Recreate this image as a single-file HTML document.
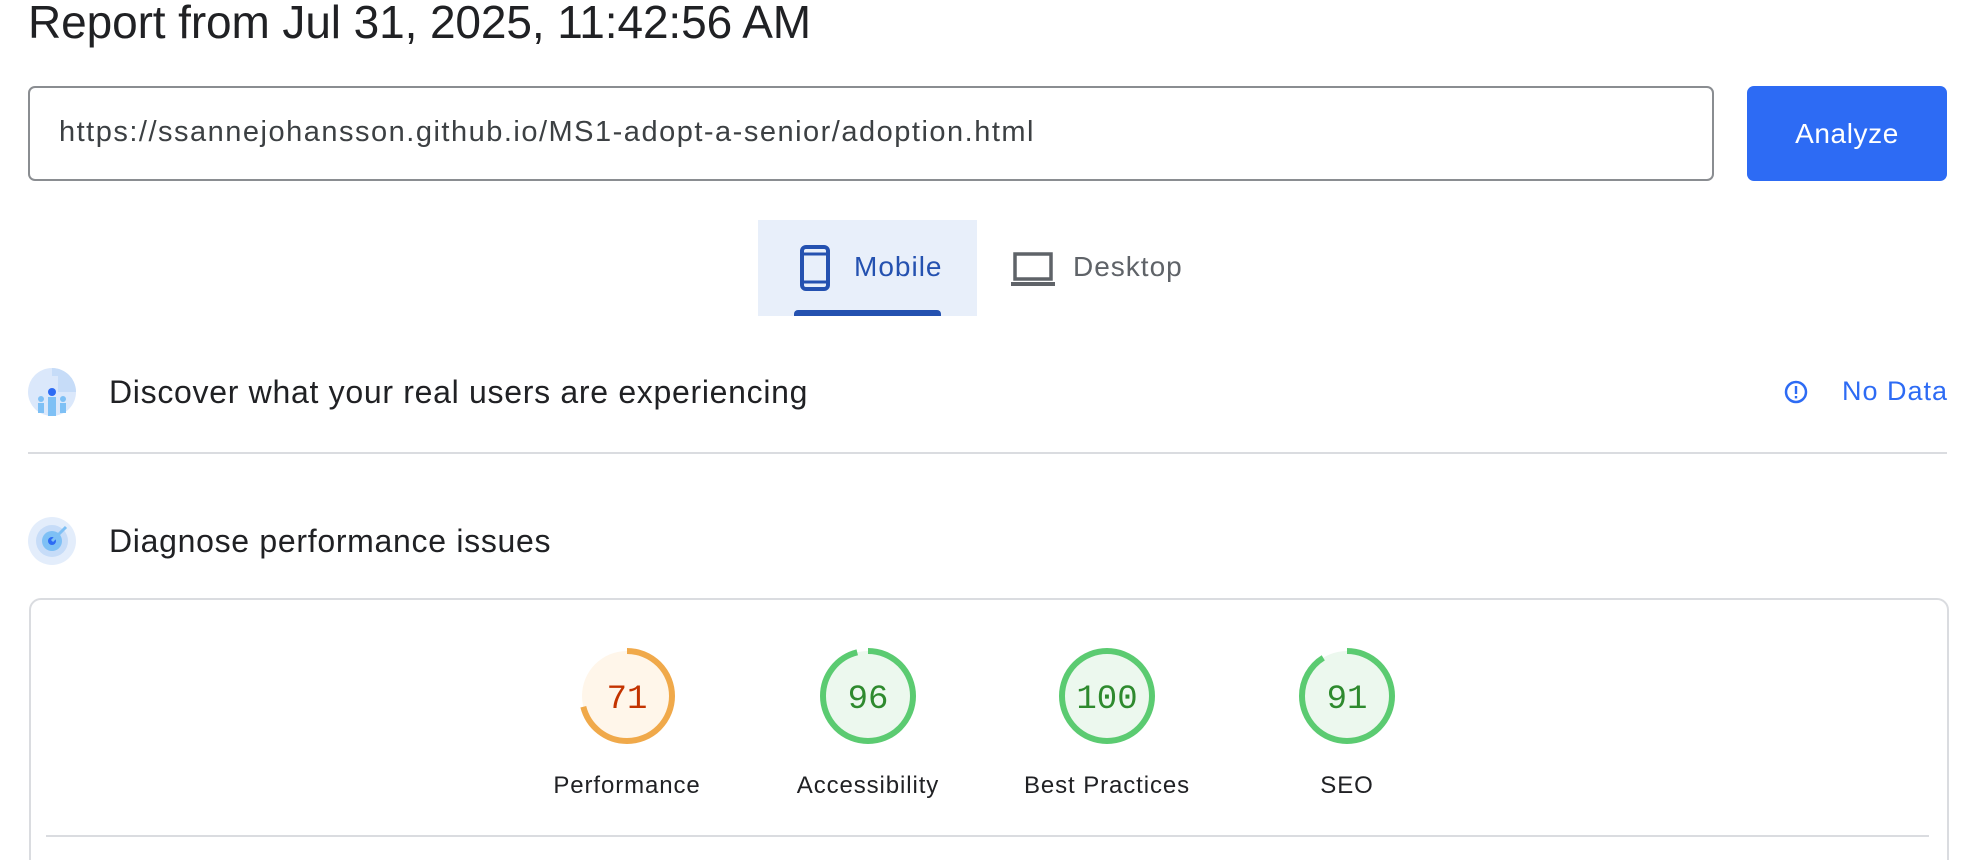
<!DOCTYPE html>
<html style="height:860px;overflow:hidden"><head><meta charset="utf-8"><style>
html,body{height:860px;overflow:hidden}
body{margin:0;width:1984px;background:#fff;font-family:"Liberation Sans",sans-serif;position:relative;color:#202124}
.a{position:absolute}
</style></head><body>
<div class="a" style="left:28px;top:-5px;font-size:46px;color:#202124;letter-spacing:-0.1px">Report from Jul 31, 2025, 11:42:56 AM</div>
<div class="a" style="left:28px;top:86px;width:1682px;height:91px;border:2px solid #8a8d91;border-radius:7px"></div>
<div class="a" style="left:59px;top:116px;font-size:29px;letter-spacing:1.5px;color:#3c4043">https://ssannejohansson.github.io/MS1-adopt-a-senior/adoption.html</div>
<div class="a" style="left:1747px;top:86px;width:200px;height:95px;background:#2d6bf4;border-radius:7px;color:#fff;font-size:28px;letter-spacing:0.6px;line-height:95px;text-align:center">Analyze</div>

<div class="a" style="left:758px;top:220px;width:219px;height:96px;background:#e8effa"></div>
<div class="a" style="left:794px;top:310px;width:147px;height:6px;background:#2451b0;border-radius:4px 4px 0 0"></div>
<svg class="a" style="left:798px;top:245px" width="34" height="46" viewBox="0 0 34 46"><rect x="4" y="2" width="26" height="42" rx="4" fill="none" stroke="#2451b0" stroke-width="4"/><line x1="4" y1="9" x2="30" y2="9" stroke="#2451b0" stroke-width="3"/><line x1="4" y1="37" x2="30" y2="37" stroke="#2451b0" stroke-width="3"/></svg>
<div class="a" style="left:854px;top:251px;font-size:28px;letter-spacing:1px;color:#2451b0">Mobile</div>
<svg class="a" style="left:1010px;top:252px" width="46" height="36" viewBox="0 0 46 36"><rect x="5" y="2" width="36" height="25" fill="none" stroke="#5f6368" stroke-width="3.5"/><rect x="1" y="30" width="44" height="4" fill="#5f6368"/></svg>
<div class="a" style="left:1073px;top:251px;font-size:28px;letter-spacing:1px;color:#5f6368">Desktop</div>

<svg class="a" style="left:28px;top:368px" width="48" height="48" viewBox="0 0 48 48"><circle cx="24" cy="24" r="24" fill="#dbe8fb"/><path d="M24 0A24 24 0 0 1 48 24H30V8H24Z" fill="#c6dcf8"/><circle cx="24" cy="24" r="4" fill="#2d6bf4"/><rect x="20" y="29" width="8" height="19" fill="#7ec0f5"/><circle cx="13" cy="31" r="3" fill="#7ec0f5"/><rect x="10" y="35" width="6" height="10" fill="#7ec0f5"/><circle cx="35" cy="31" r="3" fill="#7ec0f5"/><rect x="32" y="35" width="6" height="10" fill="#7ec0f5"/></svg>
<div class="a" style="left:109px;top:374px;font-size:32px;letter-spacing:0.7px">Discover what your real users are experiencing</div>
<svg class="a" style="left:1784px;top:380px" width="24" height="24" viewBox="0 0 24 24"><circle cx="12" cy="12" r="10" fill="none" stroke="#2d6bf4" stroke-width="2.5"/><rect x="10.8" y="6" width="2.4" height="8" fill="#2d6bf4"/><rect x="10.8" y="16" width="2.4" height="2.4" fill="#2d6bf4"/></svg>
<div class="a" style="left:1842px;top:376px;font-size:27px;letter-spacing:1px;color:#2d6bf4">No Data</div>
<div class="a" style="left:28px;top:452px;width:1919px;height:2px;background:#dadce0"></div>

<svg class="a" style="left:28px;top:517px" width="48" height="48" viewBox="0 0 48 48"><circle cx="24" cy="24" r="24" fill="#e3edfb"/><circle cx="24" cy="24" r="16" fill="#c6dcf8"/><circle cx="24" cy="24" r="10" fill="#7ec0f5"/><circle cx="24" cy="24" r="4" fill="#2d6bf4"/><path d="M24 24L38 10" stroke="#7ec0f5" stroke-width="3"/></svg>
<div class="a" style="left:109px;top:523px;font-size:32px;letter-spacing:0.7px">Diagnose performance issues</div>

<div class="a" style="left:29px;top:598px;width:1916px;height:300px;border:2px solid #dadce0;border-radius:12px"></div>
<svg class="a" style="left:0;top:0" width="1984" height="860">
<g fill="none" stroke-width="6">
<circle cx="627" cy="696" r="45" fill="#fff6ea" stroke="none"/>
<circle cx="627" cy="696" r="45" stroke="#f0a94a" stroke-dasharray="200.8 282.7" transform="rotate(-90 627 696)"/>
<circle cx="868" cy="696" r="45" fill="#ecf8ee" stroke="none"/>
<circle cx="868" cy="696" r="45" stroke="#5bcb71" stroke-dasharray="271.4 282.7" transform="rotate(-90 868 696)"/>
<circle cx="1107" cy="696" r="45" fill="#ecf8ee" stroke="#5bcb71"/>
<circle cx="1347" cy="696" r="45" fill="#ecf8ee" stroke="none"/>
<circle cx="1347" cy="696" r="45" stroke="#5bcb71" stroke-dasharray="257.3 282.7" transform="rotate(-90 1347 696)"/>
</g>
<g font-family="Liberation Mono,monospace" font-size="34" text-anchor="middle">
<text x="627" y="708" fill="#c33300">71</text>
<text x="868" y="708" fill="#2e8a2e">96</text>
<text x="1107" y="708" fill="#2e8a2e">100</text>
<text x="1347" y="708" fill="#2e8a2e">91</text>
</g>
<g font-family="Liberation Sans,sans-serif" font-size="24" letter-spacing="0.9" text-anchor="middle" fill="#202124">
<text x="627" y="793">Performance</text>
<text x="868" y="793">Accessibility</text>
<text x="1107" y="793">Best Practices</text>
<text x="1347" y="793">SEO</text>
</g>
<rect x="46" y="835" width="1883" height="2" fill="#dadce0"/>
</svg>
</body></html>
